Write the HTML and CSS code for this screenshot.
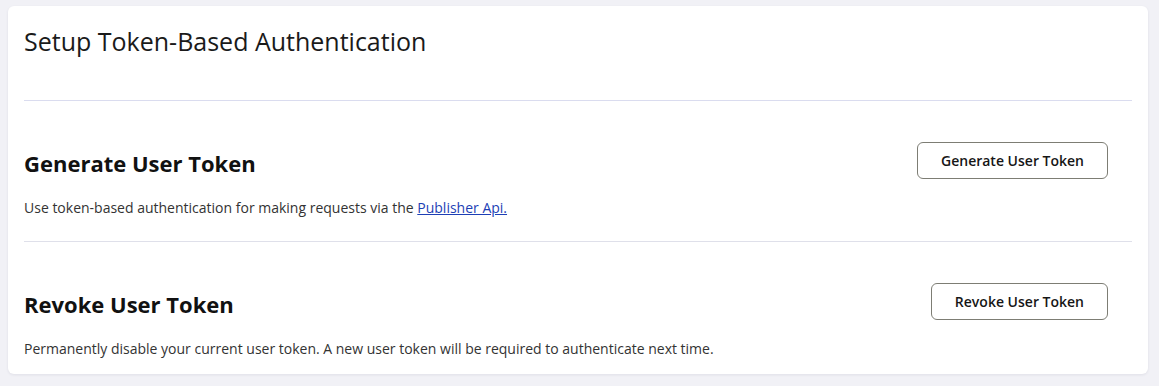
FILE: index.html
```html
<!DOCTYPE html>
<html lang="en">
<head>
    <meta charset="UTF-8" />
    <title>Setup Token-Based Authentication</title>
    <link rel="stylesheet" href="styles.css">
</head>
<body>
    <div class="card">
        <h1 class="card-title">Setup Token-Based Authentication</h1>

        <div class="token-section">
            <div class="token-info">
                <h2>Generate User Token</h2>
                <p>Use token-based authentication for making requests via the <a href="#">Publisher Api.</a></p>
            </div>
            <button class="outline-btn gen-btn">Generate User Token</button>
        </div>

        <div class="token-section">
            <div class="token-info">
                <h2>Revoke User Token</h2>
                <p>Permanently disable your current user token. A new user token will be required to authenticate next time.</p>
            </div>
            <button class="outline-btn">Revoke User Token</button>
        </div>
    </div>
</body>
</html>
```

FILE: styles.css
```css
body {
    margin: 0;
    padding: 6px 11px 12px 8px;
    background: #f1f1f6;
    font-family: 'Open Sans', 'Noto Sans', sans-serif;
    color: #1b1b1b;
}

.card {
    background: #fff;
    border-radius: 6px;
    box-shadow: 0 1px 3px rgba(30, 30, 60, 0.08);
    padding: 17px 16px 15px 16px;
}

.card-title {
    margin: 0;
    font-size: 25px;
    font-weight: 400;
    line-height: 36px;
    color: #1a1a1a;
    padding-bottom: 41px;
    border-bottom: 1px solid #dadcef;
}

.token-section {
    display: flex;
    justify-content: space-between;
    align-items: flex-start;
    padding: 41px 24px 23px 0;
}
.token-section + .token-section {
    border-top: 1px solid #dfe0ea;
    padding-bottom: 0;
}

.token-info h2 {
    margin: 5px 0 17px;
    font-size: 22px;
    font-weight: 700;
    line-height: 33px;
    color: #111;
}
.token-info p {
    margin: 0;
    font-size: 14px;
    line-height: 21px;
    color: #333;
}
.token-info a { color: #1d3fb5; }

.outline-btn {
    font-family: inherit;
    font-size: 14px;
    font-weight: 600;
    color: #161616;
    background: #fff;
    border: 1px solid #7d7d74;
    border-radius: 6px;
    height: 37px;
    padding: 0 23px;
    cursor: pointer;
}
```
